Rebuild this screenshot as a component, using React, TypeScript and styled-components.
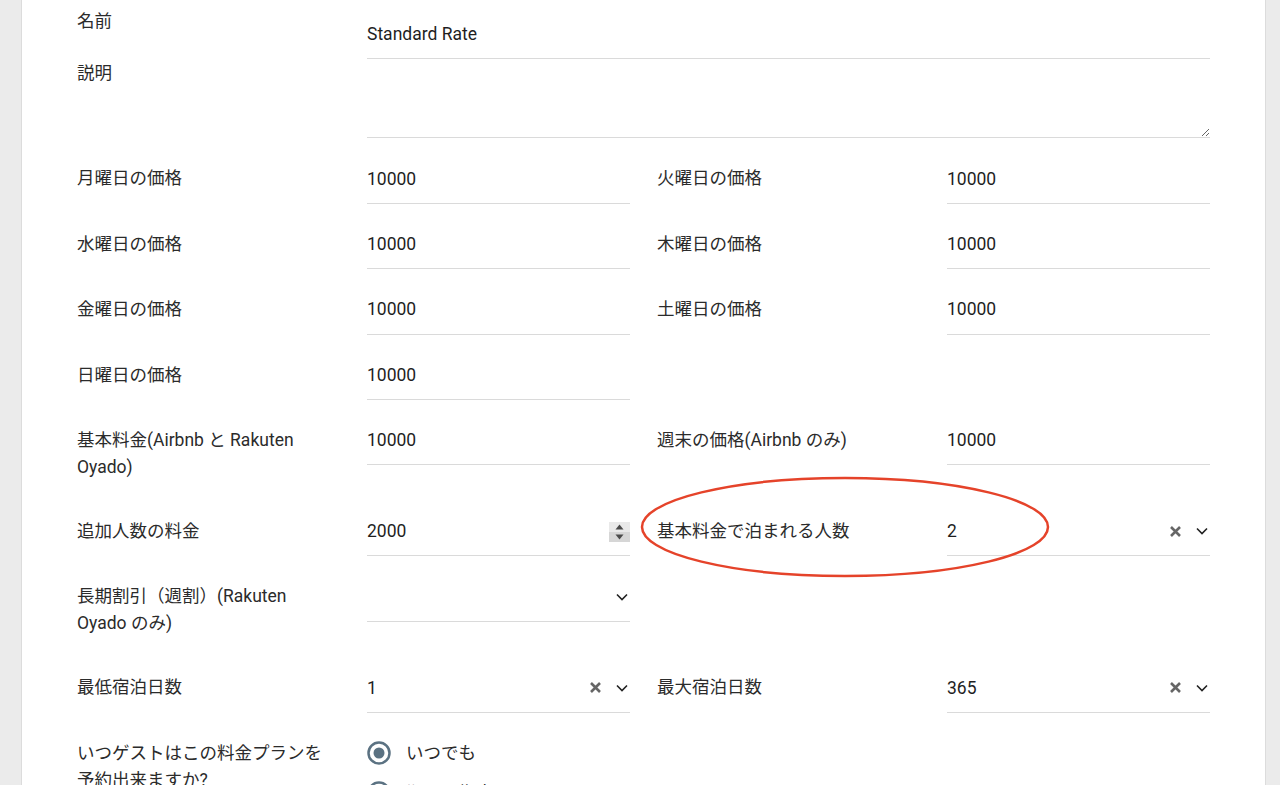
import * as React from "react";
import styled, { createGlobalStyle } from "styled-components";

const GlobalStyle = createGlobalStyle`
  html, body {
    margin: 0;
    padding: 0;
    background: #ebebeb;
    overflow: hidden;
  }
  body {
    font-family: Roboto, "Noto Sans CJK JP", sans-serif;
    font-size: 17.5px;
    color: #222;
  }
`;

const Page = styled.div`
  height: 785px;
  padding-left: 21px;
`;

const Card = styled.div`
  position: relative;
  width: 1245px;
  min-height: 785px;
  box-sizing: border-box;
  background: #fff;
  border-left: 1px solid #dcdcdc;
  border-right: 1px solid #dcdcdc;
  padding: 9px 55px 0 55px;
`;

const TopBlock = styled.div`
  display: grid;
  grid-template-columns: 290px 843px;
  margin-bottom: 15px;
`;

const Rows = styled.div`
  display: flex;
  flex-direction: column;
  gap: 15px;
`;

const Row = styled.div`
  display: grid;
  grid-template-columns: 290px 263px 27px 290px 263px;
  align-items: start;
`;

const Label = styled.div<{ $flat?: boolean; $col?: number; $shift?: number }>`
  grid-column: ${(p) => p.$col ?? 1};
  box-sizing: border-box;
  padding: ${(p) => (p.$flat ? "0" : "12px 0 10px")};
  margin-top: ${(p) => p.$shift ?? 0}px;
  padding-right: 40px;
  line-height: 27px;
  color: #2b2b2b;
`;

const Field = styled.div<{ $col?: number; $wide?: boolean }>`
  grid-column: ${(p) => (p.$wide ? "2 / 6" : p.$col ?? 2)};
  display: flex;
  align-items: center;
  height: 50.4px;
  box-sizing: border-box;
  border-bottom: 1px solid #dadada;
`;

const Value = styled.input`
  flex: 1;
  min-width: 0;
  border: none;
  outline: none;
  padding: 0;
  margin-top: 1px;
  background: transparent;
  font: inherit;
  color: #1f1f1f;
`;

const Notes = styled.textarea`
  grid-column: 2;
  display: block;
  width: 100%;
  height: 79px;
  box-sizing: border-box;
  border: none;
  border-bottom: 1px solid #dadada;
  outline: none;
  padding: 0;
  resize: vertical;
  font: inherit;
`;

const Icons = styled.div`
  display: flex;
  align-items: center;
  gap: 15px;
  margin-right: 2px;
  margin-top: 1px;
`;

const Spinner = styled.div`
  display: flex;
  flex-direction: column;
  width: 21px;
  height: 20px;
  margin-top: 3px;
`;

const SpinHalf = styled.div<{ $down?: boolean }>`
  flex: 1;
  display: flex;
  align-items: center;
  justify-content: center;
  background: ${(p) => (p.$down ? "#d6d6d6" : "#e9e9e9")};
`;

const RadioGroup = styled.div`
  grid-column: 2 / 6;
  display: flex;
  flex-direction: column;
  gap: 13px;
  padding-top: 12px;
`;

const RadioOption = styled.label`
  display: flex;
  align-items: center;
  gap: 15px;
  line-height: 27px;
  color: #2b2b2b;
`;

const Mark = styled.svg`
  position: absolute;
  left: 617px;
  top: 476px;
  pointer-events: none;
`;

const Chevron = () => (
  <svg width="12" height="8" viewBox="0 0 12 8">
    <path d="M1 1.5 L6 6.5 L11 1.5" fill="none" stroke="#222" strokeWidth="1.6" />
  </svg>
);

const Clear = () => (
  <svg width="11" height="11" viewBox="0 0 11 11">
    <path d="M1 1 L10 10 M10 1 L1 10" fill="none" stroke="#666" strokeWidth="2.6" />
  </svg>
);

const Radio = ({ on }: { on?: boolean }) => (
  <svg width="24" height="24" viewBox="0 0 24 24">
    <circle cx="12" cy="12" r="10.5" fill="none" stroke="#5b7282" strokeWidth="2.5" />
    {on && <circle cx="12" cy="12" r="5.5" fill="#5b7282" />}
  </svg>
);

type Cell = { label: string; value: string };

const TextField = ({ value, col, wide }: { value: string; col?: number; wide?: boolean }) => (
  <Field $col={col} $wide={wide}>
    <Value readOnly value={value} />
  </Field>
);

const SelectField = ({ value, col, clear }: { value: string; col?: number; clear?: boolean }) => (
  <Field $col={col}>
    <Value readOnly value={value} />
    <Icons>
      {clear && <Clear />}
      <Chevron />
    </Icons>
  </Field>
);

const pairs: [Cell, Cell | null][] = [
  [{ label: "月曜日の価格", value: "10000" }, { label: "火曜日の価格", value: "10000" }],
  [{ label: "水曜日の価格", value: "10000" }, { label: "木曜日の価格", value: "10000" }],
  [{ label: "金曜日の価格", value: "10000" }, { label: "土曜日の価格", value: "10000" }],
  [{ label: "日曜日の価格", value: "10000" }, null],
  [
    { label: "基本料金(Airbnb と Rakuten Oyado)", value: "10000" },
    { label: "週末の価格(Airbnb のみ)", value: "10000" },
  ],
];

export default function App() {
  return (
    <>
      <GlobalStyle />
      <Page>
        <Card>
          <TopBlock>
            <Label $flat $shift={-1}>名前</Label>
            <TextField value="Standard Rate" />
            <Label $flat $shift={0.5}>説明</Label>
            <Notes defaultValue="" />
          </TopBlock>

          <Rows>
            {pairs.map(([a, b], i) => (
              <Row key={i}>
                <Label>{a.label}</Label>
                <TextField value={a.value} />
                {b && <Label $col={4}>{b.label}</Label>}
                {b && <TextField col={5} value={b.value} />}
              </Row>
            ))}

            <Row>
              <Label>追加人数の料金</Label>
              <Field>
                <Value readOnly value="2000" />
                <Spinner>
                  <SpinHalf>
                    <svg width="9" height="6" viewBox="0 0 9 6">
                      <path d="M4.5 0.5 L8.5 5.5 L0.5 5.5 Z" fill="#4a4a4a" />
                    </svg>
                  </SpinHalf>
                  <SpinHalf $down>
                    <svg width="9" height="6" viewBox="0 0 9 6">
                      <path d="M0.5 0.5 L8.5 0.5 L4.5 5.5 Z" fill="#4a4a4a" />
                    </svg>
                  </SpinHalf>
                </Spinner>
              </Field>
              <Label $col={4}>基本料金で泊まれる人数</Label>
              <SelectField col={5} value="2" clear />
            </Row>

            <Row>
              <Label>長期割引（週割）(Rakuten Oyado のみ)</Label>
              <SelectField value="" />
            </Row>

            <Row>
              <Label>最低宿泊日数</Label>
              <SelectField value="1" clear />
              <Label $col={4}>最大宿泊日数</Label>
              <SelectField col={5} value="365" clear />
            </Row>

            <Row>
              <Label>いつゲストはこの料金プランを予約出来ますか?</Label>
              <RadioGroup>
                <RadioOption>
                  <Radio on />
                  いつでも
                </RadioOption>
                <RadioOption>
                  <Radio />
                  期間を指定
                </RadioOption>
              </RadioGroup>
            </Row>
          </Rows>

          <Mark width="412" height="104" viewBox="0 0 412 104">
            <ellipse cx="206" cy="51" rx="203" ry="49" fill="none" stroke="#e5432a" strokeWidth="2.5" />
          </Mark>
        </Card>
      </Page>
    </>
  );
}
